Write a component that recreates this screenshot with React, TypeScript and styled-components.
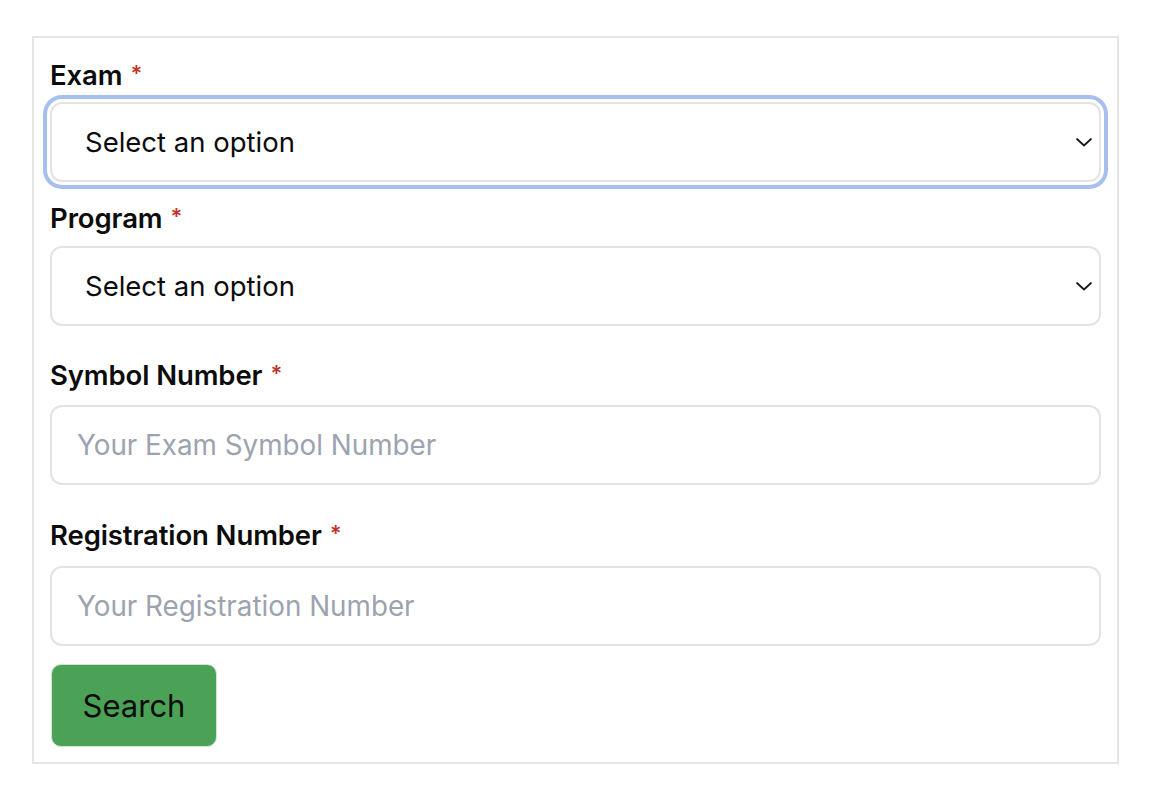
import React from "react";
import styled, { createGlobalStyle } from "styled-components";

const Global = createGlobalStyle`
  html, body { margin: 0; padding: 0; background: #ffffff; }
  body { font-family: Inter, "Noto Sans", "Liberation Sans", sans-serif; color: #111; }
  * { box-sizing: border-box; }
`;

const Page = styled.div`
  padding: 36px 31px 32px 32px;
`;

const Card = styled.form`
  width: 1087px;
  border: 2px solid #e6e6e6;
  padding: 17px 16px 15px 16px;
  display: flex;
  flex-direction: column;
`;

const Field = styled.div<{ $top: number; $gap: number }>`
  display: flex;
  flex-direction: column;
  margin-top: ${(p) => p.$top}px;
  gap: ${(p) => p.$gap}px;
`;

const Label = styled.label`
  font-size: 27.5px;
  line-height: 36px;
  font-weight: 600;
  color: #0c0c0c;
  letter-spacing: -0.1px;
`;

const Star = styled.span`
  color: #c0332b;
  font-size: 22px;
  margin-left: 8px;
  vertical-align: 4px;
`;

const SelectWrap = styled.div<{ $focused?: boolean }>`
  position: relative;
  height: 80px;
  border: 2px solid #e3e3e3;
  border-radius: 12px;
  background: #fff;
  box-shadow: ${(p) => (p.$focused ? "0 0 0 3px #ffffff, 0 0 0 7px #a7bfee" : "none")};
`;

const Select = styled.select`
  appearance: none;
  -webkit-appearance: none;
  width: 100%;
  height: 100%;
  border: none;
  outline: none;
  background: transparent;
  font-family: inherit;
  font-size: 27.5px;
  color: #0c0c0c;
  padding: 0 60px 0 33px;
  border-radius: 10px;
`;

const Chevron = styled.svg`
  position: absolute;
  right: 5px;
  top: 50%;
  width: 20px;
  height: 20px;
  transform: translateY(-50%);
  pointer-events: none;
`;

const Input = styled.input`
  height: 80px;
  border: 2px solid #e3e3e3;
  border-radius: 12px;
  padding: 0 25px;
  font-family: inherit;
  font-size: 27.8px;
  color: #0c0c0c;
  outline: none;
  &::placeholder { color: #9ca3af; }
`;

const Button = styled.button`
  align-self: flex-start;
  margin-top: 18px;
  margin-left: 1px;
  width: 166px;
  height: 83px;
  background: #4ba155;
  border: 1px solid #cde8cf;
  border-radius: 10px;
  font-family: inherit;
  font-size: 31px;
  color: #0c0c0c;
  cursor: pointer;
`;

const ChevronIcon = () => (
  <Chevron viewBox="0 0 20 20" fill="none">
    <path d="M3 7 L10 13.5 L17 7" stroke="#1a1a1a" strokeWidth="1.8" strokeLinecap="round" strokeLinejoin="round" />
  </Chevron>
);

export default function App() {
  return (
    <>
      <Global />
      <Page>
        <Card onSubmit={(e) => e.preventDefault()}>
          <Field $top={0} $gap={9}>
            <Label>
              Exam<Star>*</Star>
            </Label>
            <SelectWrap $focused>
              <Select defaultValue="">
                <option value="" disabled>
                  Select an option
                </option>
              </Select>
              <ChevronIcon />
            </SelectWrap>
          </Field>
          <Field $top={16} $gap={10}>
            <Label>
              Program<Star>*</Star>
            </Label>
            <SelectWrap>
              <Select defaultValue="">
                <option value="" disabled>
                  Select an option
                </option>
              </Select>
              <ChevronIcon />
            </SelectWrap>
          </Field>
          <Field $top={29} $gap={12}>
            <Label>
              Symbol Number<Star>*</Star>
            </Label>
            <Input placeholder="Your Exam Symbol Number" />
          </Field>
          <Field $top={30} $gap={13}>
            <Label>
              Registration Number<Star>*</Star>
            </Label>
            <Input placeholder="Your Registration Number" />
          </Field>
          <Button type="submit">Search</Button>
        </Card>
      </Page>
    </>
  );
}
